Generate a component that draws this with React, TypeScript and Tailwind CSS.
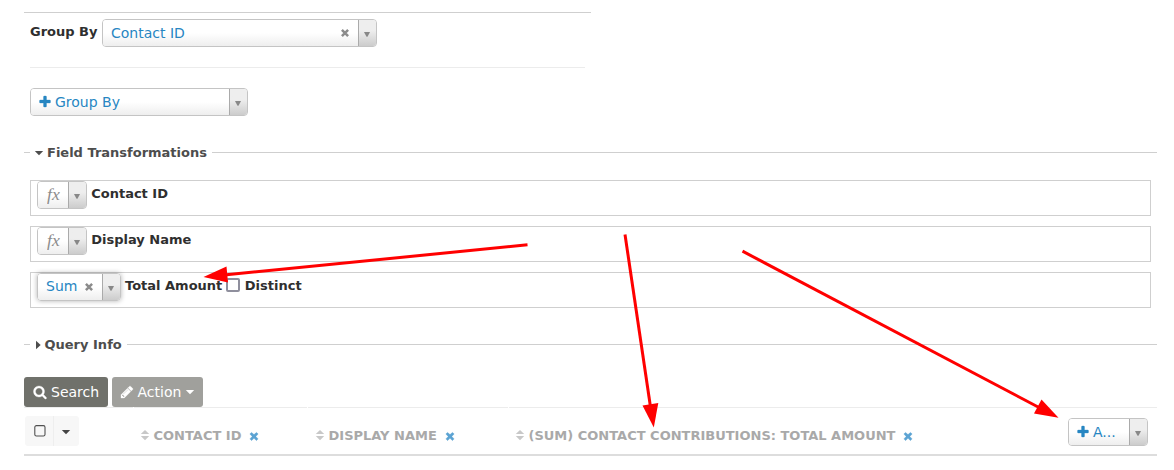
import type { ReactNode } from 'react';

const icons = {
  plus: 'M1600 736v192q0 40-28 68t-68 28h-416v416q0 40-28 68t-68 28h-192q-40 0-68-28t-28-68v-416h-416q-40 0-68-28t-28-68v-192q0-40 28-68t68-28h416v-416q0-40 28-68t68-28h192q40 0 68 28t28 68v416h416q40 0 68 28t28 68z',
  times:
    'M1490 1322q0 40-28 68l-136 136q-28 28-68 28t-68-28l-294-294-294 294q-28 28-68 28t-68-28l-136-136q-28-28-28-68t28-68l294-294-294-294q-28-28-28-68t28-68l136-136q28-28 68-28t68 28l294 294 294-294q28-28 68-28t68 28l136 136q28 28 28 68t-28 68l-294 294 294 294q28 28 28 68z',
  search:
    'M1216 832q0-185-131.5-316.5t-316.5-131.5-316.5 131.5-131.5 316.5 131.5 316.5 316.5 131.5 316.5-131.5 131.5-316.5zm512 832q0 52-38 90t-90 38q-54 0-90-38l-343-342q-179 124-399 124-143 0-273.5-55.5t-225-150-150-225-55.5-273.5 55.5-273.5 150-225 225-150 273.5-55.5 273.5 55.5 225 150 150 225 55.5 273.5q0 220-124 399l343 343q37 37 37 90z',
  pencil:
    'M491 1536l91-91-235-235-91 91v107h128v128h107zm523-928q0-22-22-22-10 0-17 7l-542 542q-7 7-7 17 0 22 22 22 10 0 17-7l542-542q7-7 7-17zm-54-192l416 416-832 832h-416v-416zm683 96q0 53-37 90l-166 166-416-416 166-165q36-38 90-38 53 0 91 38l235 234q37 39 37 91z',
};

function Icon({ name, className }: { name: keyof typeof icons; className: string }) {
  return (
    <svg viewBox="0 0 1792 1792" fill="currentColor" stroke="currentColor" strokeWidth="40" className={`shrink-0 overflow-visible ${className}`}>
      <path d={icons[name]} />
    </svg>
  );
}

function Caret({ className = '' }: { className?: string }) {
  return (
    <svg viewBox="0 0 8 4" fill="currentColor" className={`h-1 w-2 shrink-0 overflow-visible ${className}`}>
      <path d="M-.2 0h8.400L4 4.300z" />
    </svg>
  );
}

function Clear() {
  return (
    <svg viewBox="0 0 8 8" className="h-2 w-2 shrink-0 text-[#8c8c8c]" stroke="currentColor" strokeWidth="2.5">
      <path d="M.9 .9l6.2 6.2M7.1 .9L.9 7.1" />
    </svg>
  );
}

function Select({ children, className }: { children: ReactNode; className: string }) {
  return (
    <div className={`flex h-7 shrink-0 overflow-hidden rounded-[4px] border border-[#c4c4c4] text-[14px] text-[#2786c2] ${className}`}>
      <div className="flex min-w-0 flex-1 items-center bg-linear-to-b from-white from-50% to-[#eeeeee] pl-2 whitespace-nowrap">
        {children}
      </div>
      <div className="flex w-[18px] shrink-0 border-l border-[#aaaaaa] bg-linear-to-t from-[#cccccc] to-[#eeeeee] to-60% pt-3 pl-[5px] text-[#888888]">
        <svg viewBox="0 0 6 5" fill="currentColor" className="h-[5px] w-1.5 overflow-visible">
          <path d="M0 0h6L3.500 4.800h-1z" />
        </svg>
      </div>
    </div>
  );
}

function Legend({ children }: { children: ReactNode }) {
  return (
    <div className="flex h-4 items-center text-[13px] leading-4 font-bold text-[#4d4d4d]">
      <div className="mb-px h-px w-1.5 bg-[#cfcfcf]" />
      <div className="flex items-center px-[5px]">{children}</div>
      <div className="mb-px h-px flex-1 bg-[#cfcfcf]" />
    </div>
  );
}

function FieldRow({ children }: { children: ReactNode }) {
  return (
    <div className="flex h-9 items-start border border-[#cfcfcf] pl-1.5 text-[13px] leading-4 font-bold text-[#2f2f2f]">
      {children}
    </div>
  );
}

function Fx() {
  return (
    <Select className="w-[50px] font-normal">
      <span className="origin-left scale-x-110 pl-px font-['Liberation_Serif',serif] text-[16px] leading-none text-[#8c8c8c] italic">
        fx
      </span>
    </Select>
  );
}

function Column({ label, className }: { label: string; className: string }) {
  return (
    <div className={`flex h-[47px] items-center border-t border-[#ececec] pt-[9px] text-[13px] font-bold whitespace-nowrap text-[#a9a9a9] ${className}`}>
      <svg viewBox="0 0 8 10" fill="#c8c8c8" className="mr-[4.500px] mb-px h-2.5 w-2 shrink-0 overflow-visible">
        <path d="M-.2 4.100L4-.1l4.200 4.200zM-.2 6h8.400L4 10.200z" />
      </svg>
      <span>{label}</span>
      <Icon name="times" className="mt-px ml-[7px] h-3 w-3 text-[#5ba3d3]" />
    </div>
  );
}

function Arrows() {
  return (
    <svg viewBox="0 0 1174 470" className="pointer-events-none absolute inset-0 h-full w-full" fill="#ff0000">
      <g stroke="#ff0000" strokeWidth="3">
        <path d="M527.500 244.800L224 275" />
        <path d="M625 234.500L650.500 407" />
        <path d="M742.500 251.200L1040 408" />
      </g>
      <path d="M203.500 277L226.500 266.500L228 282.500z" />
      <path d="M653.800 427.500L642.500 405.500L658.300 403z" />
      <path d="M1058.500 417.800L1034 413.500L1041.500 399.500z" />
    </svg>
  );
}

export default function App() {
  return (
    <main className="relative h-[470px] w-[1174px] overflow-hidden bg-white pt-3 pl-6 font-['DejaVu_Sans',sans-serif]">
      <section className="h-[133px] w-[567px] border-t border-[#cfcfcf] px-1.5 pt-1.5">
        <div className="flex h-[49px] items-start border-b border-[#ececec]">
          <span className="w-[72px] shrink-0 pt-[5px] text-[13px] leading-4 font-bold whitespace-nowrap text-[#2f2f2f]">Group By</span>
          <Select className="w-[275px]">
            <span className="flex-1">Contact ID</span>
            <span className="mr-[9px]"><Clear /></span>
          </Select>
        </div>
        <div className="pt-5">
          <Select className="w-[218px]">
            <Icon name="plus" className="mr-[3px] -ml-px h-3.5 w-3.5" />
            <span>Group By</span>
          </Select>
        </div>
      </section>

      <div className="w-[1133px]">
        <Legend>
          <Caret className="mr-1" />
          Field Transformations
        </Legend>
        <div className="mt-[19px] flex flex-col gap-2.5 px-1.5">
          <FieldRow>
            <Fx />
            <span className="pt-[5px] pl-[4.200px]">Contact ID</span>
          </FieldRow>
          <FieldRow>
            <Fx />
            <span className="pt-[5px] pl-[4.200px]">Display Name</span>
          </FieldRow>
          <FieldRow>
            <Select className="w-[84px] font-normal shadow-[0_0_5px_rgba(0,0,0,0.3)]">
              <span className="flex-1 pb-0.5">Sum</span>
              <span className="mr-[9px]"><Clear /></span>
            </Select>
            <span className="pt-[5px] pl-1">Total Amount</span>
            <span className="mt-[5px] mr-[4.500px] ml-[4px] h-3.5 w-3.5 rounded-[2px] border-2 border-[#8f8f9d] bg-white" />
            <span className="pt-[5px]">Distinct</span>
          </FieldRow>
        </div>
        <div className="mt-[29px]">
          <Legend>
            <div className="-mt-px flex h-4 items-center">
              <svg viewBox="0 0 4 8" fill="currentColor" className="mr-[4.500px] ml-px h-2 w-1 overflow-visible">
                <path d="M0-.3v8.600L4.700 4z" />
              </svg>
              Query Info
            </div>
          </Legend>
        </div>

        <div className="mt-6 flex h-[30px] gap-1 text-[14px] text-white">
          <button className="flex w-[84px] items-center rounded-[3px] bg-[#70716b] pl-[9px]">
            <Icon name="search" className="mr-1 h-3.5 w-3.5" />
            Search
          </button>
          <button className="flex w-[91px] items-center rounded-[3px] bg-[#a0a09c] pl-2">
            <Icon name="pencil" className="mr-[3.500px] h-3.5 w-3.5" />
            Action
            <Caret className="ml-[5px]" />
          </button>
        </div>

        <div className="flex border-b-2 border-[#dddddd]">
          <div className="h-[47px] w-[109px] border-t border-[#ececec] pt-2 pl-px">
            <div className="flex h-[30px] w-[54px] overflow-hidden rounded-[3px] bg-[#f7f7f7] text-[#444444]">
              <div className="flex w-[29px] items-center border-r border-[#eeeeee] pb-px pl-[9px]">
                <svg viewBox="0 0 12 12" className="h-3 w-3" fill="none" stroke="#505050" strokeWidth="1.1">
                  <rect x=".8" y=".6" width="10.2" height="10.400" rx="1.6" />
                </svg>
              </div>
              <div className="flex flex-1 items-center pt-[2px] pl-2">
                <Caret />
              </div>
            </div>
          </div>
          <Column label="CONTACT ID" className="ml-px w-[173px] pl-[7px]" />
          <Column label="DISPLAY NAME" className="ml-px w-[200px] pl-2" />
          <Column label="(SUM) CONTACT CONTRIBUTIONS: TOTAL AMOUNT" className="ml-px flex-1 pl-[7px]" />
          <div className="h-[47px] w-[89px] border-t border-[#ececec] pt-[10px]">
            <Select className="w-20">
              <Icon name="plus" className="mr-[3px] -ml-px h-3.5 w-3.5" />
              <span>A...</span>
            </Select>
          </div>
        </div>
      </div>
      <Arrows />
    </main>
  );
}
